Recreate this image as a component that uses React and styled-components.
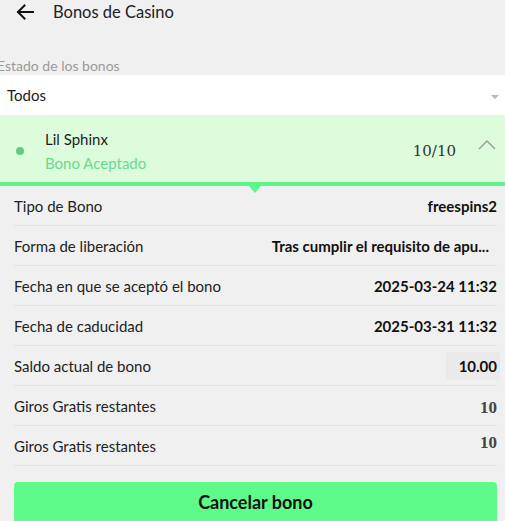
import React from "react";
import styled, { createGlobalStyle } from "styled-components";

const Global = createGlobalStyle`
  html, body { margin: 0; padding: 0; background: #f0f0f0; }
  body { font-family: Lato, "Open Sans", sans-serif; color: #1a1a1a; overflow: hidden; }
  * { box-sizing: border-box; }
`;

const Page = styled.div`
  width: 505px;
  height: 521px;
  background: #f0f0f0;
  display: flex;
  flex-direction: column;
  overflow: hidden;
  & > * { flex-shrink: 0; }
`;

const Header = styled.div`
  height: 24px;
  display: flex;
  align-items: center;
  gap: 19px;
  padding-left: 16px;
`;

const BackButton = styled.svg`
  width: 18px;
  height: 16px;
  display: block;
`;

const Title = styled.h1`
  margin: 0;
  font-size: 16.5px;
  font-weight: 400;
  color: #222;
`;

const FilterLabel = styled.div`
  margin-top: 33px;
  margin-left: -3px;
  height: 18px;
  line-height: 18px;
  font-size: 14px;
  color: #9a9a9a;
`;

const Select = styled.div`
  height: 40px;
  background: #fff;
  display: flex;
  align-items: center;
  justify-content: space-between;
  padding: 0 6px 0 7px;
  font-size: 15px;
  color: #1a1a1a;
`;

const Caret = styled.span`
  width: 0;
  height: 0;
  border-left: 4px solid transparent;
  border-right: 4px solid transparent;
  border-top: 4px solid #b5b5b5;
  margin-top: 4px;
`;

const Card = styled.div`
  position: relative;
  height: 71px;
  background: #dcfcdc;
  border-bottom: 4px solid #5ef58b;
  display: flex;
  align-items: center;
  padding: 0 9px 0 16px;
`;

const Pointer = styled.span`
  position: absolute;
  left: 249px;
  bottom: -11px;
  width: 0;
  height: 0;
  border-left: 6px solid transparent;
  border-right: 6px solid transparent;
  border-top: 7px solid #5ef58b;
`;

const Dot = styled.span`
  width: 8px;
  height: 8px;
  border-radius: 50%;
  background: #5ecb86;
  margin-top: 4px;
`;

const CardText = styled.div`
  margin: 4px 0 0 21px;
  display: flex;
  flex-direction: column;
  gap: 6px;
  flex: 1;
`;

const Name = styled.div`
  font-size: 15px;
  color: #1c1c1c;
`;

const Status = styled.div`
  font-size: 15px;
  color: #6ad892;
`;

const Count = styled.div`
  font-family: "DejaVu Serif", serif;
  font-size: 15px;
  color: #333;
  margin-top: 4px;
  margin-right: 22px;
`;

const Chevron = styled.svg`
  width: 18px;
  height: 12px;
  margin-top: -8px;
`;

const Details = styled.div`
  padding: 0 8px 0 14px;
`;

const Row = styled.div`
  height: 40px;
  display: flex;
  align-items: center;
  justify-content: space-between;
  border-bottom: 1px solid #e2e2e2;
`;

const Label = styled.span`
  font-size: 15px;
  color: #222;
`;

const Value = styled.span`
  font-size: 15px;
  font-weight: 700;
  color: #111;
  padding-right: ${(p) => p.$pr || 0}px;
`;

const Pill = styled.span`
  font-size: 15px;
  font-weight: 700;
  color: #111;
  background: #eaeaea;
  padding: 5px 3px 5px 13px;
  margin-right: -3px;
  border-radius: 3px;
`;

const SerifValue = styled.span`
  font-family: "Liberation Serif", "Times New Roman", serif;
  font-size: 17px;
  font-weight: 700;
  color: #444;
  margin-top: ${(p) => (p.$up ? -6 : 4)}px;
`;

const CancelButton = styled.button`
  margin: 16px 8px 0 14px;
  height: 44px;
  border: none;
  border-radius: 4px;
  background: #5efb8a;
  font-family: Lato, sans-serif;
  font-size: 18px;
  font-weight: 700;
  color: #111;
  padding: 0 0 4px;
`;

const rows = [
  ["Tipo de Bono", <Value key="v">freespins2</Value>],
  ["Forma de liberación", <Value key="v" $pr={8}>Tras cumplir el requisito de apu...</Value>],
  ["Fecha en que se aceptó el bono", <Value key="v">2025-03-24 11:32</Value>],
  ["Fecha de caducidad", <Value key="v">2025-03-31 11:32</Value>],
  ["Saldo actual de bono", <Pill key="v">10.00</Pill>],
  ["Giros Gratis restantes", <SerifValue key="v">10</SerifValue>],
  ["Giros Gratis restantes", <SerifValue key="v" $up>10</SerifValue>],
];

export default function App() {
  return (
    <Page>
      <Global />
      <Header>
        <BackButton viewBox="0 0 18 16" aria-label="Volver">
          <path d="M17 8H2M8.5 1.5L2 8l6.5 6.5" fill="none" stroke="#111" strokeWidth="2" strokeLinecap="square" />
        </BackButton>
        <Title>Bonos de Casino</Title>
      </Header>
      <FilterLabel>Estado de los bonos</FilterLabel>
      <Select>
        <span>Todos</span>
        <Caret />
      </Select>
      <Card>
        <Dot />
        <CardText>
          <Name>Lil Sphinx</Name>
          <Status>Bono Aceptado</Status>
        </CardText>
        <Count>10/10</Count>
        <Chevron viewBox="0 0 18 12">
          <path d="M1 10L9 2l8 8" fill="none" stroke="#9a9a9a" strokeWidth="1.4" />
        </Chevron>
        <Pointer />
      </Card>
      <Details>
        {rows.map(([label, value], i) => (
          <Row key={i}>
            <Label>{label}</Label>
            {value}
          </Row>
        ))}
      </Details>
      <CancelButton>Cancelar bono</CancelButton>
    </Page>
  );
}
